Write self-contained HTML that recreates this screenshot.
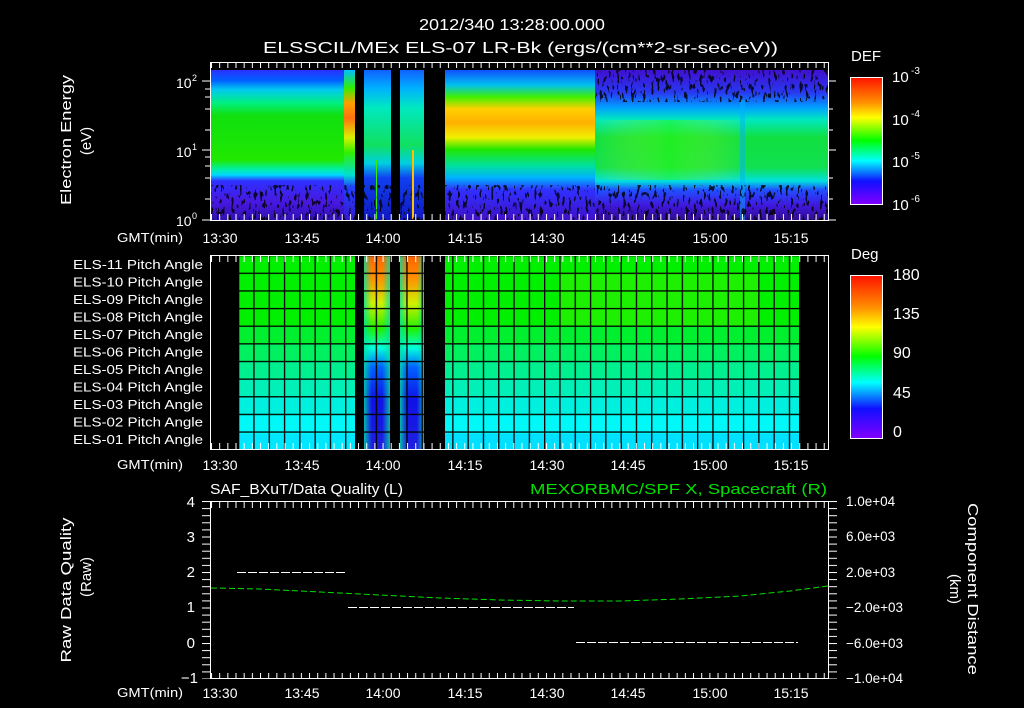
<!DOCTYPE html>
<html><head><meta charset="utf-8"><style>
html,body{margin:0;padding:0;background:#000;}
svg{display:block;}
text{font-family:"Liberation Sans",sans-serif;fill:#fff;}
</style></head><body>
<svg width="1024" height="708" viewBox="0 0 1024 708" xmlns="http://www.w3.org/2000/svg">
<defs>
 <filter id="speck" x="0" y="0" width="100%" height="100%">
  <feTurbulence type="fractalNoise" baseFrequency="0.35 0.12" numOctaves="2" seed="3" result="n"/>
  <feColorMatrix in="n" type="matrix" values="0 0 0 0 0  0 0 0 0 0  0 0 0 0 0  0 0 0 -25 10"/>
 </filter>
 <linearGradient id="gA" x1="0" y1="70" x2="0" y2="220" gradientUnits="userSpaceOnUse">
  <stop offset="0" stop-color="#2a30ff"/><stop offset="0.07" stop-color="#0060ff"/>
  <stop offset="0.13" stop-color="#00c8f0"/><stop offset="0.22" stop-color="#00f080"/>
  <stop offset="0.3" stop-color="#10e010"/><stop offset="0.6" stop-color="#20e800"/>
  <stop offset="0.66" stop-color="#00f0a0"/><stop offset="0.7" stop-color="#00d8ff"/>
  <stop offset="0.74" stop-color="#3030ff"/><stop offset="0.88" stop-color="#4818e0"/>
  <stop offset="1" stop-color="#3010b0"/></linearGradient>
 <linearGradient id="gB" x1="0" y1="70" x2="0" y2="220" gradientUnits="userSpaceOnUse">
  <stop offset="0" stop-color="#00c0ff"/><stop offset="0.12" stop-color="#30f000"/>
  <stop offset="0.22" stop-color="#ffa000"/><stop offset="0.32" stop-color="#ff7010"/>
  <stop offset="0.45" stop-color="#d8f000"/><stop offset="0.55" stop-color="#30f000"/>
  <stop offset="0.7" stop-color="#00e0d0"/><stop offset="0.78" stop-color="#2040ff"/>
  <stop offset="1" stop-color="#3818d0"/></linearGradient>
 <linearGradient id="gC" x1="0" y1="70" x2="0" y2="220" gradientUnits="userSpaceOnUse">
  <stop offset="0" stop-color="#1060ff"/><stop offset="0.12" stop-color="#00b0ff"/>
  <stop offset="0.25" stop-color="#00e8c0"/><stop offset="0.5" stop-color="#10e060"/>
  <stop offset="0.62" stop-color="#00d0e0"/><stop offset="0.72" stop-color="#1040f0"/>
  <stop offset="1" stop-color="#1018c0"/></linearGradient>
 <linearGradient id="gE" x1="0" y1="70" x2="0" y2="220" gradientUnits="userSpaceOnUse">
  <stop offset="0" stop-color="#1050ff"/><stop offset="0.1" stop-color="#00c0f0"/>
  <stop offset="0.18" stop-color="#40f000"/><stop offset="0.26" stop-color="#ffd000"/>
  <stop offset="0.35" stop-color="#ffb000"/><stop offset="0.45" stop-color="#f0f000"/>
  <stop offset="0.53" stop-color="#20e800"/><stop offset="0.64" stop-color="#00e0a0"/>
  <stop offset="0.72" stop-color="#00b0ff"/><stop offset="0.8" stop-color="#3030ff"/>
  <stop offset="1" stop-color="#4010c8"/></linearGradient>
 <linearGradient id="gF" x1="0" y1="70" x2="0" y2="220" gradientUnits="userSpaceOnUse">
  <stop offset="0" stop-color="#4010d0"/><stop offset="0.15" stop-color="#2838f0"/>
  <stop offset="0.25" stop-color="#00a0ff"/><stop offset="0.33" stop-color="#00e8c0"/>
  <stop offset="0.45" stop-color="#10e040"/><stop offset="0.65" stop-color="#10e050"/>
  <stop offset="0.74" stop-color="#00e0e0"/><stop offset="0.8" stop-color="#2050ff"/>
  <stop offset="0.9" stop-color="#4018e0"/><stop offset="1" stop-color="#300c90"/></linearGradient>
 <linearGradient id="cb1" x1="0" y1="77" x2="0" y2="204" gradientUnits="userSpaceOnUse">
  <stop offset="0" stop-color="#ff1000"/><stop offset="0.2" stop-color="#ff9000"/>
  <stop offset="0.32" stop-color="#ffff00"/><stop offset="0.5" stop-color="#00ff00"/>
  <stop offset="0.66" stop-color="#00ffff"/><stop offset="0.82" stop-color="#1010ff"/>
  <stop offset="1" stop-color="#8000ff"/></linearGradient>
 <linearGradient id="cb2" x1="0" y1="275" x2="0" y2="438" gradientUnits="userSpaceOnUse">
  <stop offset="0" stop-color="#ff1000"/><stop offset="0.2" stop-color="#ff9000"/>
  <stop offset="0.32" stop-color="#ffff00"/><stop offset="0.5" stop-color="#00ff00"/>
  <stop offset="0.66" stop-color="#00ffff"/><stop offset="0.82" stop-color="#1010ff"/>
  <stop offset="1" stop-color="#8000ff"/></linearGradient>
 <linearGradient id="pcol" x1="0" y1="255" x2="0" y2="449" gradientUnits="userSpaceOnUse">
  <stop offset="0" stop-color="#ff6000"/><stop offset="0.12" stop-color="#ff9000"/>
  <stop offset="0.25" stop-color="#d0f000"/><stop offset="0.38" stop-color="#20f000"/>
  <stop offset="0.48" stop-color="#00ffe0"/><stop offset="0.58" stop-color="#0060ff"/>
  <stop offset="0.75" stop-color="#1010e8"/><stop offset="1" stop-color="#2020e0"/></linearGradient>
 <linearGradient id="edge" x1="0" y1="0" x2="1" y2="0">
  <stop offset="0" stop-color="#00e0a0" stop-opacity="0.8"/><stop offset="0.3" stop-color="#00e0a0" stop-opacity="0"/>
  <stop offset="0.7" stop-color="#00e0a0" stop-opacity="0"/><stop offset="1" stop-color="#00e0a0" stop-opacity="0.8"/></linearGradient>
 <linearGradient id="mid" x1="0" y1="0" x2="1" y2="0">
  <stop offset="0" stop-color="#ffff00" stop-opacity="0"/><stop offset="0.5" stop-color="#30ff00" stop-opacity="0.45"/>
  <stop offset="1" stop-color="#ffff00" stop-opacity="0"/></linearGradient>
 <pattern id="vgrid" x="238" y="0" width="15.3" height="10" patternUnits="userSpaceOnUse">
  <rect x="0" y="0" width="1.3" height="10" fill="#000"/></pattern>
 <pattern id="hgrid" x="0" y="255" width="10" height="17.64" patternUnits="userSpaceOnUse">
  <rect x="0" y="0" width="10" height="1.3" fill="#000"/></pattern>
 <pattern id="tk" x="211" y="0" width="8.17" height="10" patternUnits="userSpaceOnUse">
  <rect x="0" y="0" width="1" height="10" fill="#fff"/></pattern>
 <pattern id="ytk" x="0" y="501" width="10" height="7.1" patternUnits="userSpaceOnUse">
  <rect x="0" y="0" width="10" height="1" fill="#fff"/></pattern>
</defs>

<text x="512" y="30" font-size="16" text-anchor="middle" textLength="186" lengthAdjust="spacingAndGlyphs">2012/340 13:28:00.000</text>
<text x="263" y="53" font-size="16" textLength="515" lengthAdjust="spacingAndGlyphs">ELSSCIL/MEx ELS-07 LR-Bk  (ergs/(cm**2-sr-sec-eV))</text>

<!-- top panel -->
<rect x="211" y="70" width="133" height="150" fill="url(#gA)"/>
<rect x="344" y="70" width="11" height="150" fill="url(#gB)"/>
<rect x="364" y="70" width="27" height="150" fill="url(#gC)"/>
<rect x="400" y="70" width="24" height="150" fill="url(#gC)"/>
<rect x="412" y="150" width="2" height="70" fill="#ffc000"/>
<rect x="376" y="160" width="1" height="60" fill="#30f000"/>
<rect x="445" y="70" width="150" height="150" fill="url(#gE)"/>
<rect x="595" y="70" width="233" height="150" fill="url(#gF)"/>
<rect x="595" y="120" width="150" height="60" fill="url(#mid)"/>
<rect x="740" y="100" width="5" height="120" fill="#00b0ff" opacity="0.5"/>
<rect x="211" y="185" width="617" height="35" filter="url(#speck)" opacity="0.8"/>
<rect x="595" y="70" width="233" height="32" filter="url(#speck)" opacity="0.8"/>
<rect x="355" y="70" width="9" height="150" fill="#000"/>
<rect x="391" y="70" width="9" height="150" fill="#000"/>
<rect x="424" y="70" width="21" height="150" fill="#000"/>
<rect x="211" y="62" width="617" height="8" fill="#000"/>
<rect x="211" y="62" width="617" height="6" fill="url(#tk)"/>
<rect x="211" y="214" width="617" height="6" fill="url(#tk)"/>
<rect x="210.5" y="62.5" width="618" height="158" fill="none" stroke="#fff" stroke-width="1"/>
<g stroke="#fff" stroke-width="1">
 <line x1="202" y1="81" x2="210" y2="81"/><line x1="202" y1="150" x2="210" y2="150"/><line x1="202" y1="220" x2="210" y2="220"/>
 <line x1="205" y1="89" x2="210" y2="89"/><line x1="205" y1="97" x2="210" y2="97"/><line x1="205" y1="109" x2="210" y2="109"/><line x1="205" y1="130" x2="210" y2="130"/>
 <line x1="205" y1="157" x2="210" y2="157"/><line x1="205" y1="166" x2="210" y2="166"/><line x1="205" y1="178" x2="210" y2="178"/><line x1="205" y1="199" x2="210" y2="199"/>
 <line x1="829" y1="81" x2="836" y2="81"/><line x1="829" y1="150" x2="836" y2="150"/><line x1="829" y1="220" x2="836" y2="220"/>
 <line x1="829" y1="109" x2="833" y2="109"/><line x1="829" y1="130" x2="833" y2="130"/><line x1="829" y1="178" x2="833" y2="178"/><line x1="829" y1="199" x2="833" y2="199"/>
</g>
<text x="176" y="88" font-size="14">10</text><text x="192" y="81" font-size="9">2</text>
<text x="176" y="157" font-size="14">10</text><text x="192" y="150" font-size="9">1</text>
<text x="176" y="226" font-size="14">10</text><text x="192" y="219" font-size="9">0</text>
<text transform="translate(71,140) rotate(-90)" font-size="15" text-anchor="middle" textLength="130" lengthAdjust="spacingAndGlyphs">Electron Energy</text>
<text transform="translate(91,141) rotate(-90)" font-size="15" text-anchor="middle">(eV)</text>

<text x="851" y="61" font-size="15">DEF</text>
<rect x="850.5" y="77.5" width="32" height="127" fill="url(#cb1)" stroke="#fff"/>
<text x="892" y="82" font-size="15">10</text><text x="911" y="74" font-size="10">-3</text>
<text x="892" y="125" font-size="15">10</text><text x="911" y="117" font-size="10">-4</text>
<text x="892" y="167" font-size="15">10</text><text x="911" y="159" font-size="10">-5</text>
<text x="892" y="210" font-size="15">10</text><text x="911" y="202" font-size="10">-6</text>

<g font-size="13">
<text x="117" y="242" textLength="66" lengthAdjust="spacingAndGlyphs">GMT(min)</text>
<text x="117" y="469" textLength="66" lengthAdjust="spacingAndGlyphs">GMT(min)</text>
<text x="117" y="697" textLength="66" lengthAdjust="spacingAndGlyphs">GMT(min)</text>
</g>
<g font-size="14" text-anchor="middle">
 <g id="tl">
 <text x="220" y="243">13:30</text><text x="302" y="243">13:45</text><text x="383" y="243">14:00</text><text x="465" y="243">14:15</text>
 <text x="547" y="243">14:30</text><text x="628" y="243">14:45</text><text x="710" y="243">15:00</text><text x="791" y="243">15:15</text>
 </g>
 <use href="#tl" y="227"/>
 <use href="#tl" y="455"/>
</g>

<!-- middle panel -->
<rect x="238" y="255" width="117" height="194" fill="#00f0a0"/>
<rect x="238" y="255" width="117" height="71" fill="#00f000"/>
<rect x="238" y="326" width="117" height="18" fill="#00f030"/>
<rect x="238" y="344" width="117" height="18" fill="#00f060"/>
<rect x="238" y="362" width="117" height="18" fill="#00f090"/>
<rect x="238" y="380" width="117" height="18" fill="#00f0b8"/>
<rect x="238" y="398" width="117" height="18" fill="#00f0e0"/>
<rect x="238" y="416" width="117" height="18" fill="#00f8f8"/>
<rect x="238" y="434" width="117" height="15" fill="#00e8ff"/>
<rect x="445" y="255" width="354" height="194" fill="#00f0a0"/>
<rect x="445" y="255" width="354" height="71" fill="#00f000"/>
<rect x="560" y="272" width="200" height="54" fill="#30f000" opacity="0.6"/>
<rect x="445" y="326" width="354" height="18" fill="#00f030"/>
<rect x="445" y="344" width="354" height="18" fill="#00f060"/>
<rect x="445" y="362" width="354" height="18" fill="#00f090"/>
<rect x="445" y="380" width="354" height="18" fill="#00f0b8"/>
<rect x="445" y="398" width="354" height="18" fill="#00f0e0"/>
<rect x="445" y="416" width="354" height="18" fill="#00f8f8"/>
<rect x="445" y="434" width="354" height="15" fill="#00e0ff"/>
<rect x="364" y="255" width="26" height="194" fill="url(#pcol)"/>
<rect x="364" y="255" width="26" height="194" fill="url(#edge)"/>
<rect x="400" y="255" width="24" height="194" fill="url(#pcol)"/>
<rect x="400" y="255" width="24" height="194" fill="url(#edge)"/>
<rect x="238" y="255" width="561" height="194" fill="url(#vgrid)"/>
<rect x="238" y="255" width="561" height="194" fill="url(#hgrid)"/>
<rect x="355" y="255" width="9" height="194" fill="#000"/>
<rect x="390" y="255" width="10" height="194" fill="#000"/>
<rect x="424" y="255" width="21" height="194" fill="#000"/>
<rect x="211" y="256" width="617" height="6" fill="url(#tk)"/>
<rect x="211" y="443" width="617" height="6" fill="url(#tk)"/>
<rect x="210.5" y="255.5" width="618" height="194" fill="none" stroke="#fff"/>
<g font-size="13" text-anchor="end">
<text x="203" y="269" textLength="130" lengthAdjust="spacingAndGlyphs">ELS-11 Pitch Angle</text>
<text x="203" y="286.5" textLength="130" lengthAdjust="spacingAndGlyphs">ELS-10 Pitch Angle</text>
<text x="203" y="304" textLength="130" lengthAdjust="spacingAndGlyphs">ELS-09 Pitch Angle</text>
<text x="203" y="321.5" textLength="130" lengthAdjust="spacingAndGlyphs">ELS-08 Pitch Angle</text>
<text x="203" y="339" textLength="130" lengthAdjust="spacingAndGlyphs">ELS-07 Pitch Angle</text>
<text x="203" y="356.5" textLength="130" lengthAdjust="spacingAndGlyphs">ELS-06 Pitch Angle</text>
<text x="203" y="374" textLength="130" lengthAdjust="spacingAndGlyphs">ELS-05 Pitch Angle</text>
<text x="203" y="391.5" textLength="130" lengthAdjust="spacingAndGlyphs">ELS-04 Pitch Angle</text>
<text x="203" y="409" textLength="130" lengthAdjust="spacingAndGlyphs">ELS-03 Pitch Angle</text>
<text x="203" y="426.5" textLength="130" lengthAdjust="spacingAndGlyphs">ELS-02 Pitch Angle</text>
<text x="203" y="444" textLength="130" lengthAdjust="spacingAndGlyphs">ELS-01 Pitch Angle</text>
</g>

<text x="851" y="259" font-size="15">Deg</text>
<rect x="850.5" y="275.5" width="32" height="163" fill="url(#cb2)" stroke="#fff"/>
<g font-size="16">
<text x="893" y="280">180</text><text x="893" y="319">135</text><text x="893" y="358">90</text><text x="893" y="398">45</text><text x="893" y="437">0</text>
</g>

<!-- bottom panel -->
<text x="210" y="494" font-size="15" textLength="193" lengthAdjust="spacingAndGlyphs">SAF_BXuT/Data Quality (L)</text>
<text x="530" y="494" font-size="15" style="fill:#00e000" textLength="297" lengthAdjust="spacingAndGlyphs">MEXORBMC/SPF X, Spacecraft (R)</text>
<rect x="211" y="502" width="617" height="6" fill="url(#tk)"/>
<rect x="211" y="673" width="617" height="6" fill="url(#tk)"/>
<rect x="202" y="501" width="8" height="178" fill="url(#ytk)"/>
<rect x="829" y="501" width="8" height="178" fill="url(#ytk)"/>
<rect x="210.5" y="501.5" width="618" height="177" fill="none" stroke="#fff"/>
<polyline points="211,588 260,589 320,592 380,595 440,598 500,600 560,601 620,601 680,599 740,596 790,591 828,586" fill="none" stroke="#00e000" stroke-width="1" stroke-dasharray="6,3"/>
<g stroke="#fff" stroke-width="1" stroke-dasharray="9,2">
<line x1="237" y1="572.5" x2="347" y2="572.5"/>
<line x1="348" y1="607.5" x2="574" y2="607.5"/>
<line x1="576" y1="642.5" x2="798" y2="642.5"/>
</g>
<g font-size="15" text-anchor="end">
<text x="195" y="507">4</text><text x="195" y="542">3</text><text x="195" y="577">2</text><text x="195" y="612">1</text><text x="195" y="648">0</text><text x="198" y="683">−1</text>
</g>
<g font-size="13.5">
<text x="846" y="506">1.0e+04</text><text x="846" y="541">6.0e+03</text><text x="846" y="577">2.0e+03</text>
<text x="846" y="612">−2.0e+03</text><text x="846" y="648">−6.0e+03</text><text x="846" y="683">−1.0e+04</text>
</g>
<text transform="translate(71,590) rotate(-90)" font-size="15" text-anchor="middle" textLength="145" lengthAdjust="spacingAndGlyphs">Raw Data Quality</text>
<text transform="translate(91,577) rotate(-90)" font-size="15" text-anchor="middle">(Raw)</text>
<text transform="translate(968,589) rotate(90)" font-size="15" text-anchor="middle" textLength="172" lengthAdjust="spacingAndGlyphs">Component Distance</text>
<text transform="translate(950,589) rotate(90)" font-size="15" text-anchor="middle">(km)</text>
</svg>
</body></html>
